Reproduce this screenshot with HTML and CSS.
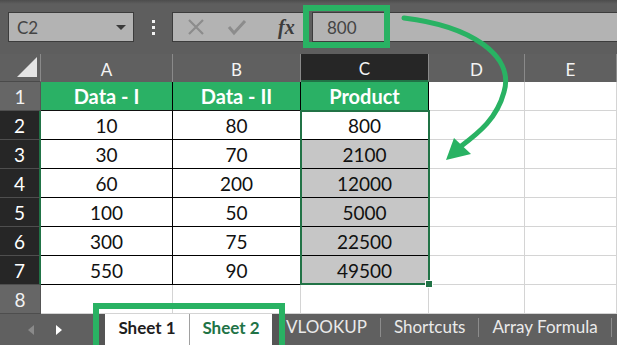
FILE: index.html
```html
<!DOCTYPE html>
<html lang="en">
<head>
    <meta charset="UTF-8">
    <title>Product formula</title>
    <link rel="stylesheet" href="styles.css">
</head>
<body>
    <div class="topbar">
        <div class="namebox">
            <span>C2</span>
            <span class="caret"></span>
        </div>
        <div class="dots"><i></i><i></i><i></i></div>
        <div class="fxbox">
            <svg class="btn" width="18" height="18" viewBox="0 0 18 18"><path d="M2 2 L16 16 M16 2 L2 16" stroke="#8c8c8c" stroke-width="2.2" fill="none"/></svg>
            <svg class="btn" width="20" height="18" viewBox="0 0 20 18"><path d="M2 9 L7 15 L18 3" stroke="#8c8c8c" stroke-width="3" fill="none"/></svg>
            <span class="fx">fx</span>
        </div>
        <div class="formula">800</div>
    </div>

    <div class="sheet">
        <div class="corner"><span class="tri"></span></div>
        <div class="colhead">A</div>
        <div class="colhead">B</div>
        <div class="colhead active">C</div>
        <div class="colhead">D</div>
        <div class="colhead">E</div>

        <div class="rowhead">1</div>
        <div class="cell head">Data - I</div>
        <div class="cell head">Data - II</div>
        <div class="cell head">Product</div>
        <div class="cell blank"></div>
        <div class="cell blank"></div>

        <div class="rowhead sel">2</div>
        <div class="cell">10</div>
        <div class="cell">80</div>
        <div class="cell">800</div>
        <div class="cell blank"></div>
        <div class="cell blank"></div>

        <div class="rowhead sel">3</div>
        <div class="cell">30</div>
        <div class="cell">70</div>
        <div class="cell shade">2100</div>
        <div class="cell blank"></div>
        <div class="cell blank"></div>

        <div class="rowhead sel">4</div>
        <div class="cell">60</div>
        <div class="cell">200</div>
        <div class="cell shade">12000</div>
        <div class="cell blank"></div>
        <div class="cell blank"></div>

        <div class="rowhead sel">5</div>
        <div class="cell">100</div>
        <div class="cell">50</div>
        <div class="cell shade">5000</div>
        <div class="cell blank"></div>
        <div class="cell blank"></div>

        <div class="rowhead sel">6</div>
        <div class="cell">300</div>
        <div class="cell">75</div>
        <div class="cell shade">22500</div>
        <div class="cell blank"></div>
        <div class="cell blank"></div>

        <div class="rowhead sel">7</div>
        <div class="cell">550</div>
        <div class="cell">90</div>
        <div class="cell shade">49500</div>
        <div class="cell blank"></div>
        <div class="cell blank"></div>

        <div class="rowhead">8</div>
        <div class="cell blank"></div>
        <div class="cell blank"></div>
        <div class="cell blank"></div>
        <div class="cell blank"></div>
        <div class="cell blank"></div>

        <div class="selection"><span class="handle"></span></div>
    </div>

    <div class="tabbar">
        <div class="nav">
            <span class="arrow left"></span>
            <span class="arrow right"></span>
        </div>
        <div class="tabs">
            <div class="tab current">Sheet 1</div>
            <div class="tab green">Sheet 2</div>
        </div>
        <div class="tab other first">VLOOKUP</div>
        <div class="tab other">Shortcuts</div>
        <div class="tab other">Array Formula</div>
    </div>

    <!-- callouts drawn over the screen -->
    <svg class="callout" width="617" height="345" viewBox="0 0 617 345">
        <rect x="306" y="8" width="81" height="37" fill="none" stroke="#29b263" stroke-width="6"/>
        <rect x="96" y="306" width="186" height="42" fill="none" stroke="#29b263" stroke-width="6"/>
        <path d="M404 18 C 470 26, 515 55, 504 92 C 497 118, 480 132, 460 147" fill="none" stroke="#29b263" stroke-width="5" stroke-linecap="round"/>
        <polygon points="446,160 454,138 471,154" fill="#29b263"/>
    </svg>
</body>
</html>
```

FILE: styles.css
```css
body {
    margin: 0;
    width: 617px;
    height: 345px;
    overflow: hidden;
    position: relative;
    background-color: #606060;
    font-family: 'Lato', 'Liberation Sans', sans-serif;
}

.topbar {
    height: 54px;
    box-sizing: border-box;
    display: flex;
    align-items: flex-start;
    padding: 12px 0 0 8px;
    background: linear-gradient(#4c4c4c 0, #5e5e5e 4px, #5e5e5e 100%);
}

.namebox {
    width: 126px;
    height: 30px;
    box-sizing: border-box;
    border: 1px solid #3c3c3c;
    background-color: #b3b3b3;
    display: flex;
    align-items: center;
    justify-content: space-between;
    padding: 0 7px 0 8px;
    font-size: 17px;
    color: #444;
}

.caret {
    width: 0;
    height: 0;
    border-left: 5px solid transparent;
    border-right: 5px solid transparent;
    border-top: 5px solid #3a3a3a;
}

.dots {
    width: 38px;
    height: 30px;
    display: flex;
    flex-direction: column;
    align-items: center;
    justify-content: center;
    gap: 3px;
}

.dots i {
    width: 3px;
    height: 3px;
    background-color: #f2f2f2;
}

.fxbox {
    width: 137px;
    height: 30px;
    box-sizing: border-box;
    border: 1px solid #3c3c3c;
    border-right: none;
    background-color: #b3b3b3;
    display: flex;
    align-items: center;
    padding-left: 14px;
    gap: 22px;
}

.fx {
    font-family: 'Liberation Serif', serif;
    font-style: italic;
    font-weight: bold;
    font-size: 20px;
    color: #3c3c3c;
    margin-left: 9px;
}

.formula {
    flex: 1;
    height: 30px;
    box-sizing: border-box;
    margin-left: 3px;
    border-top: 1px solid #3c3c3c;
    border-left: 1px solid #3c3c3c;
    border-bottom: 1px solid #3c3c3c;
    background-color: #b3b3b3;
    padding: 4px 0 0 14px;
    font-size: 17px;
    color: #444;
}

.sheet {
    display: grid;
    grid-template-columns: 41px 132px 128px 128px 96px 92px;
    grid-template-rows: 28px repeat(8, 29px);
    position: relative;
    background-color: #fff;
}

.corner {
    background-color: #606060;
    border-right: 1px solid #8a8a8a;
    border-bottom: 1px solid #4a4a4a;
    position: relative;
}

.tri {
    position: absolute;
    right: 3px;
    bottom: 4px;
    width: 0;
    height: 0;
    border-left: 20px solid transparent;
    border-bottom: 20px solid #e4e4e4;
}

.colhead {
    background-color: #606060;
    color: #f4f4f4;
    font-size: 17px;
    display: flex;
    align-items: center;
    justify-content: center;
    border-right: 1px solid #8a8a8a;
    padding-top: 3px;
    box-sizing: border-box;
}

.colhead.active {
    background-color: #262626;
    border-bottom: 2px solid #217346;
}

.rowhead {
    background-color: #666;
    color: #f2f2f2;
    font-size: 19px;
    display: flex;
    align-items: center;
    justify-content: center;
    border-bottom: 1px solid #4e4e4e;
    border-right: 1px solid #555;
    box-sizing: border-box;
}

.rowhead.sel {
    background-color: #262626;
    color: #fff;
    border-right: 2px solid #217346;
}

.cell {
    box-sizing: border-box;
    border-right: 1px solid #000;
    border-bottom: 1px solid #000;
    display: flex;
    align-items: center;
    justify-content: center;
    font-size: 19px;
    color: #111;
}

.cell.head {
    background-color: #2ab165;
    color: #fff;
    font-weight: bold;
    font-size: 20px;
    border-bottom: 1px solid #111;
}

.cell.shade {
    background-color: #c6c6c6;
}

.cell.blank {
    border-right: 1px solid #d4d4d4;
    border-bottom: 1px solid #d4d4d4;
}

.selection {
    position: absolute;
    left: 300px;
    top: 56px;
    width: 130px;
    height: 175px;
    box-sizing: border-box;
    border: 2px solid #217346;
}

.handle {
    position: absolute;
    right: -5px;
    bottom: -5px;
    width: 6px;
    height: 6px;
    background-color: #217346;
    border: 1px solid #fff;
}

.tabbar {
    height: 31px;
    display: flex;
    align-items: stretch;
    background-color: #606060;
    color: #eaeaea;
    font-size: 17px;
}

.nav {
    width: 99px;
    display: flex;
    align-items: center;
    padding-left: 28px;
    box-sizing: border-box;
    gap: 22px;
}

.arrow {
    width: 0;
    height: 0;
    border-top: 5px solid transparent;
    border-bottom: 5px solid transparent;
}

.arrow.left {
    border-right: 6px solid #8a8a8a;
}

.arrow.right {
    border-left: 6px solid #fff;
}

.tabs {
    display: flex;
    padding: 0 7px 0 6px;
    background-color: #555;
}

.tab {
    display: flex;
    align-items: center;
    padding: 0 14px;
}

.tab.current {
    background-color: #fff;
    color: #1e1e1e;
    font-weight: bold;
    border-right: 1px solid #a0a0a0;
    width: 85px;
    box-sizing: border-box;
    justify-content: center;
    padding: 0 0 4px;
}

.tab.green {
    background-color: #fff;
    color: #217346;
    font-weight: bold;
    width: 82px;
    box-sizing: border-box;
    justify-content: center;
    padding: 0 0 4px;
}

.tab.other {
    padding: 0 13px 3px;
    border-right: 1px solid #8c8c8c;
    margin: 4px 0 8px;
}

.tab.other.first {
    padding-left: 7px;
}

.callout {
    position: absolute;
    left: 0;
    top: 0;
    pointer-events: none;
}
```
